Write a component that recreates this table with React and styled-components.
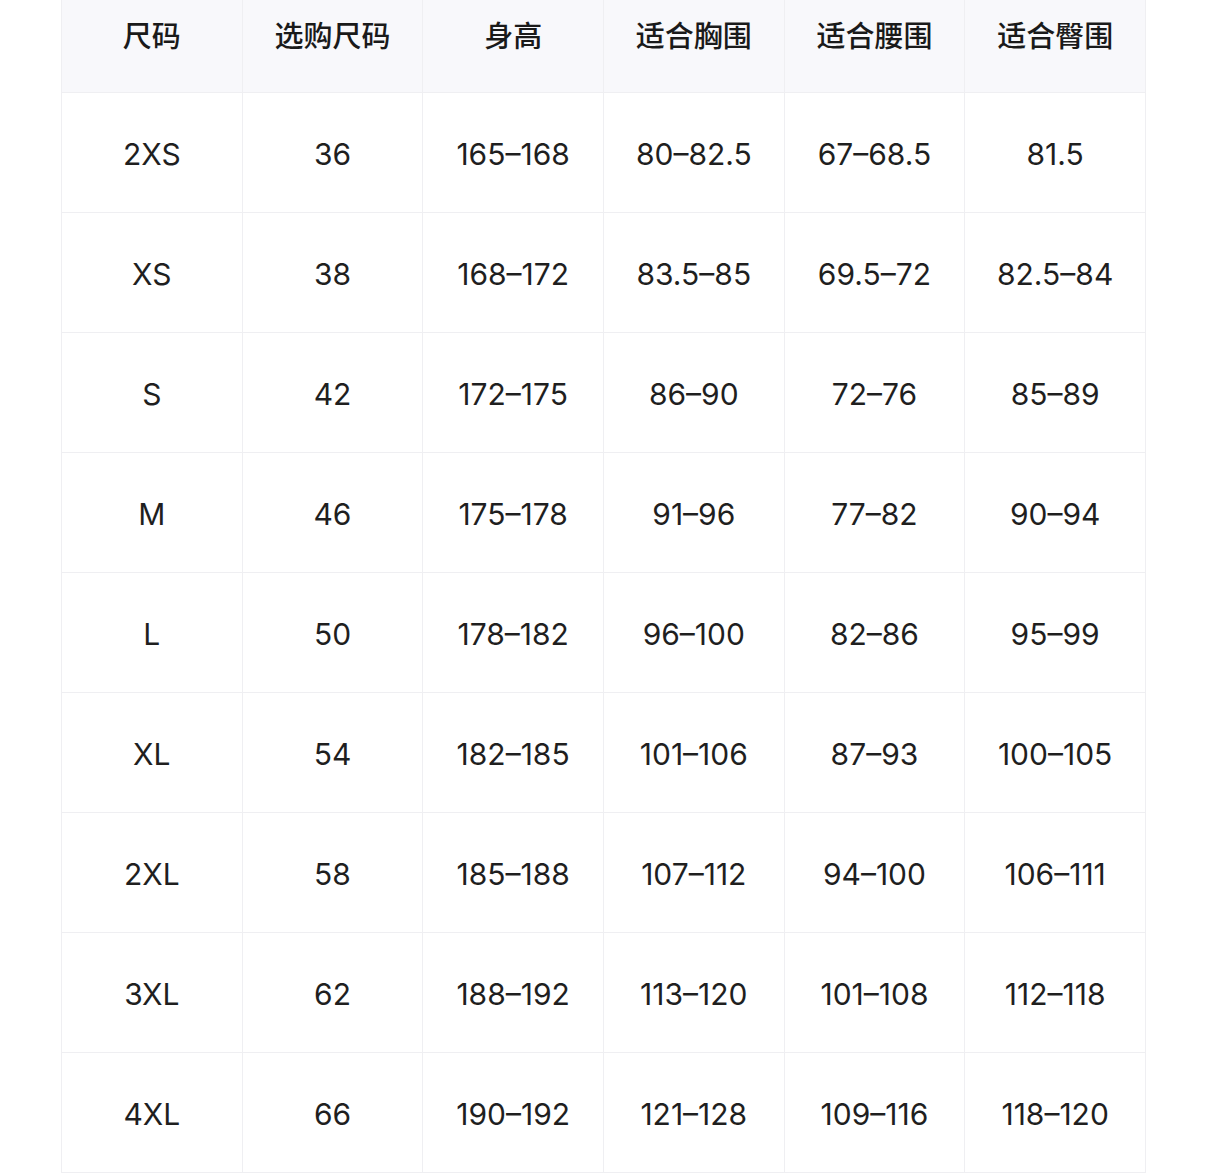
import React from "react";
import styled, { createGlobalStyle } from "styled-components";

const GlobalStyle = createGlobalStyle`
  html, body {
    margin: 0;
    padding: 0;
    background: #ffffff;
  }
  body {
    font-family: "Inter", "Noto Sans CJK SC", sans-serif;
    color: #1f1f1f;
  }
`;

const Page = styled.div`
  padding: 0 60px 0 61px;
  height: 1175px;
  overflow: hidden;
`;

const Table = styled.table`
  width: 1085px;
  border-collapse: collapse;
  table-layout: fixed;
`;

const HeadCell = styled.th`
  height: 92px;
  padding: 0 0 24px;
  box-sizing: border-box;
  background: #f8f8fb;
  border: 1px solid #efeff2;
  border-top: none;
  font-family: "Noto Sans CJK SC", sans-serif;
  font-size: 29px;
  font-weight: 500;
  color: #1a1a1a;
  text-align: center;
  vertical-align: middle;
`;

const Cell = styled.td`
  height: 120px;
  padding: 4px 0 0;
  box-sizing: border-box;
  border: 1px solid #efeff2;
  font-size: 30px;
  font-weight: 400;
  color: #1f1f1f;
  text-align: center;
  vertical-align: middle;
`;

const headers = ["尺码", "选购尺码", "身高", "适合胸围", "适合腰围", "适合臀围"];

const rows = [
  ["2XS", "36", "165–168", "80–82.5", "67–68.5", "81.5"],
  ["XS", "38", "168–172", "83.5–85", "69.5–72", "82.5–84"],
  ["S", "42", "172–175", "86–90", "72–76", "85–89"],
  ["M", "46", "175–178", "91–96", "77–82", "90–94"],
  ["L", "50", "178–182", "96–100", "82–86", "95–99"],
  ["XL", "54", "182–185", "101–106", "87–93", "100–105"],
  ["2XL", "58", "185–188", "107–112", "94–100", "106–111"],
  ["3XL", "62", "188–192", "113–120", "101–108", "112–118"],
  ["4XL", "66", "190–192", "121–128", "109–116", "118–120"],
];

export default function App() {
  return (
    <>
      <GlobalStyle />
      <Page>
        <Table>
          <thead>
            <tr>
              {headers.map((h) => (
                <HeadCell key={h}>{h}</HeadCell>
              ))}
            </tr>
          </thead>
          <tbody>
            {rows.map((row) => (
              <tr key={row[0]}>
                {row.map((value, i) => (
                  <Cell key={i}>{value}</Cell>
                ))}
              </tr>
            ))}
          </tbody>
        </Table>
      </Page>
    </>
  );
}
